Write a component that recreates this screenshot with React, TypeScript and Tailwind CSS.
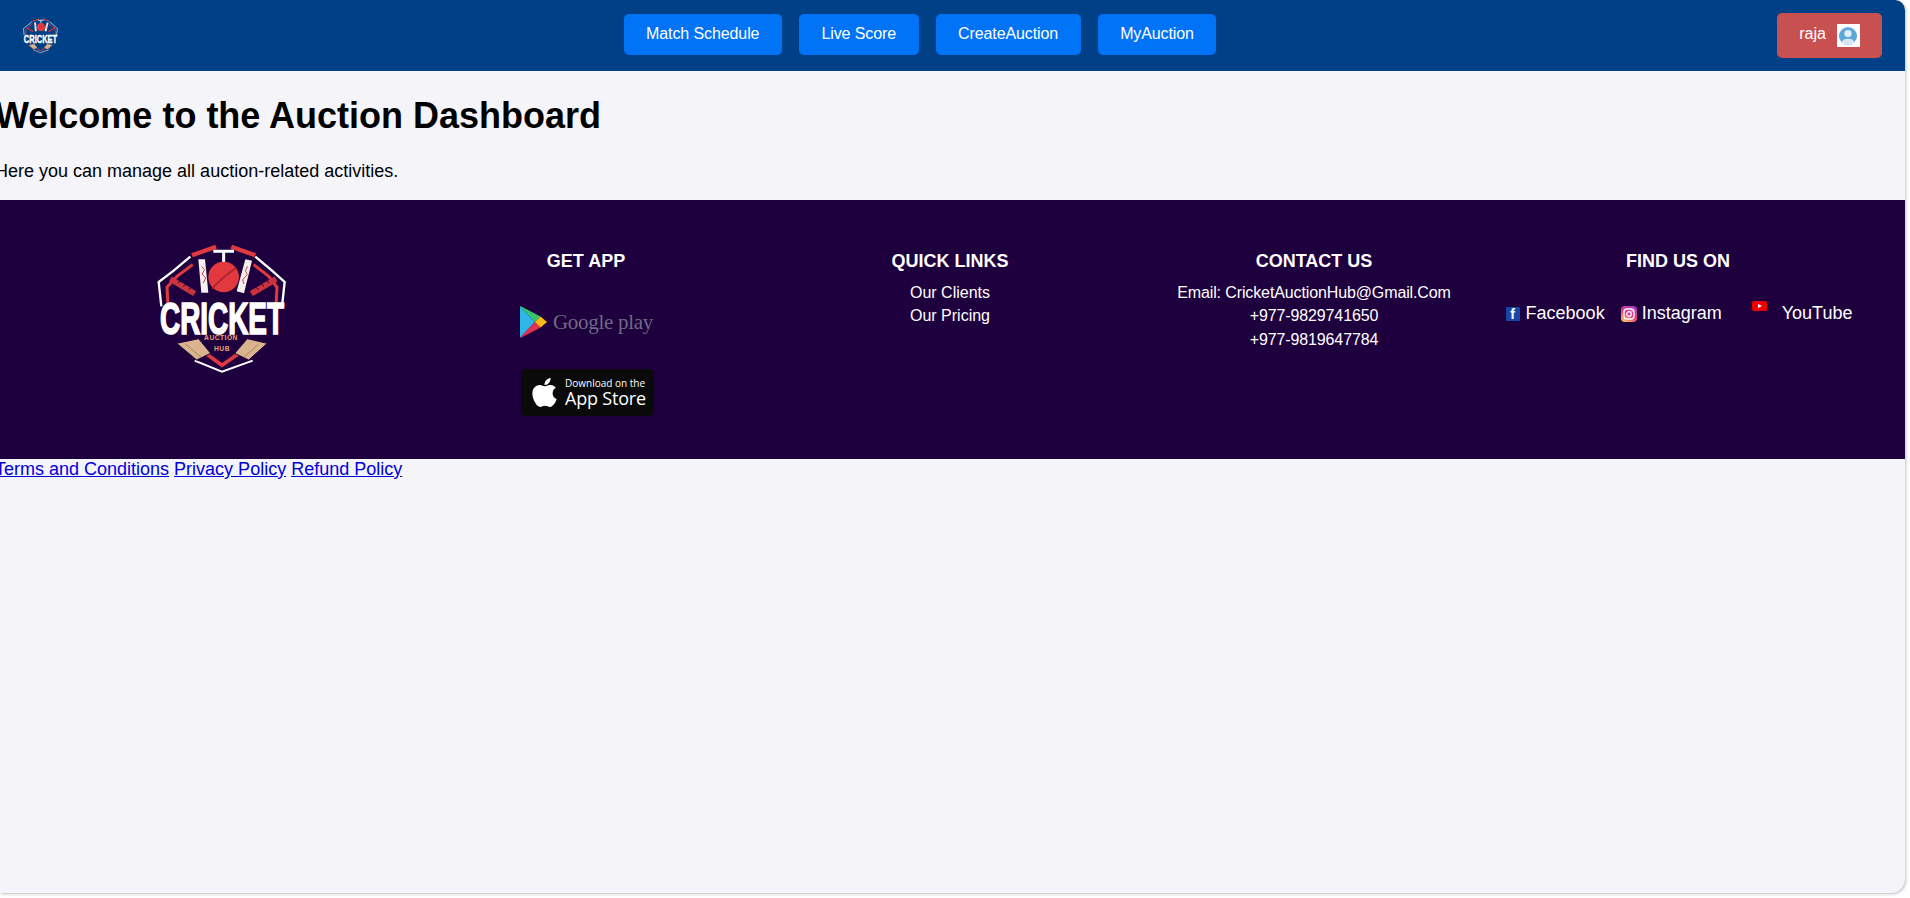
import { FaApple } from "react-icons/fa";

const NAV_ITEMS = ["Match Schedule", "Live Score", "CreateAuction", "MyAuction"];

function CricketLogo({ className, detail = true }: { className: string; detail?: boolean }) {
  return (
    <svg viewBox="55 35 390 390" className={className}>
      {/* shield */}
      <path d="M155 76 L105 118 L60 152 L68 225 M350 76 L400 118 L438 152 L430 225" fill="none" stroke="#fff" strokeWidth="7" />
      <path d="M162 100 L115 135 L85 168 L88 225 M345 100 L390 135 L415 168 L412 225" fill="none" stroke="#e0393f" strokeWidth="9" />
      {/* bails */}
      <path d="M160 72 L232 46" stroke="#e0393f" strokeWidth="13" />
      <path d="M278 46 L350 72" stroke="#e0393f" strokeWidth="13" />
      <path d="M224 60 H286 M255 60 V92" stroke="#fff" strokeWidth="9" fill="none" />
      {/* stumps */}
      <polygon points="179,84 199,84 209,184 188,184" fill="#f4f0ee" />
      <polygon points="320,84 340,88 316,186 294,180" fill="#f4f0ee" />
      <path d="M189 105 L198 115 L190 128 L201 140 L194 155" stroke="#c9444a" strokeWidth="3" fill="none" />
      <path d="M327 105 L320 118 L326 130 L312 145 L316 158" stroke="#c9444a" strokeWidth="3" fill="none" />
      {/* ball */}
      <circle cx="255" cy="137" r="46" fill="#e2393f" />
      <path d="M292 110 C270 125 240 150 220 172" stroke="#a8242c" strokeWidth="5" fill="none" />
      {/* bat handles */}
      <path d="M95 143 L168 187" stroke="#c9343c" strokeWidth="17" />
      <path d="M412 143 L338 187" stroke="#c9343c" strokeWidth="17" />
      <path d="M118 155 L128 146 M134 165 L144 156 M150 175 L160 166 M392 155 L382 146 M376 165 L366 156 M360 175 L350 166" stroke="#1f003f" strokeWidth="3" />
      {/* chevrons */}
      <path d="M190 358 L250 402 L312 358" fill="none" stroke="#e0393f" strokeWidth="11" />
      <path d="M168 388 L250 421 L342 388" fill="none" stroke="#fff" strokeWidth="6" />
      {/* bats */}
      <polygon points="114,336 180,322 216,366 174,386" fill="#d9b48c" stroke="#1f003f" strokeWidth="3" />
      <polygon points="386,336 326,322 288,366 330,386" fill="#d9b48c" stroke="#1f003f" strokeWidth="3" />
      <path d="M140 338 L188 378 M360 338 L316 378" stroke="#a98560" strokeWidth="3" />
      <text x="64" y="309" textLength="372" lengthAdjust="spacingAndGlyphs" fontFamily="'Liberation Sans', sans-serif" fontWeight="700" fontSize="132" fill="#fff" stroke="#fff" strokeWidth="5">
        CRICKET
      </text>
      {detail && (
        <>
          <text x="247" y="327" textAnchor="middle" fontFamily="'Liberation Sans', sans-serif" fontWeight="700" fontSize="20" letterSpacing="1.5" fill="#e8a36f">
            AUCTION
          </text>
          <text x="250" y="358" textAnchor="middle" fontFamily="'Liberation Sans', sans-serif" fontWeight="700" fontSize="20" letterSpacing="1.5" fill="#e8a36f">
            HUB
          </text>
        </>
      )}
    </svg>
  );
}

function GooglePlayBadge() {
  return (
    <div className="flex h-[34px] w-[134px] items-center">
      <svg viewBox="0 0 30 34" className="h-[34px] w-[28px] shrink-0">
        <polygon points="0,0 16,17 0,34" fill="#2fb6e8" />
        <polygon points="0,0 1,0 22,11 16,17" fill="#37c46f" />
        <polygon points="0,34 1,34 22,23 16,17" fill="#e5304f" />
        <polygon points="22,11 29,17 22,23 16,17" fill="#fbb915" />
      </svg>
      <span className="ml-[5px] font-['Liberation_Serif',serif] text-[21px] leading-none tracking-[-0.3px] whitespace-nowrap text-[#6f6984]">
        Google play
      </span>
    </div>
  );
}

function AppStoreBadge() {
  return (
    <div className="flex h-[47px] w-[133px] items-center rounded-[5px] bg-[#0a0a0a] pl-[9px] text-white">
      <FaApple className="h-[33px] w-[29px] shrink-0" />
      <div className="ml-[6px] flex flex-col font-['Open_Sans',sans-serif]">
        <span className="text-[10px] leading-[12px] whitespace-nowrap">Download on the</span>
        <span className="text-[18px] leading-[19px] font-medium tracking-[-0.2px] whitespace-nowrap">App Store</span>
      </div>
    </div>
  );
}

function InstagramIcon() {
  return (
    <svg viewBox="0 0 16 16" className="h-4 w-4 shrink-0">
      <defs>
        <linearGradient id="ig" x1="0.2" y1="1" x2="0.8" y2="0">
          <stop offset="0" stopColor="#fdc468" />
          <stop offset="0.45" stopColor="#e8417c" />
          <stop offset="1" stopColor="#a737c8" />
        </linearGradient>
      </defs>
      <rect width="16" height="16" rx="4" fill="url(#ig)" />
      <rect x="3" y="3" width="10" height="10" rx="3" fill="none" stroke="#fff" strokeWidth="1.3" />
      <circle cx="8" cy="8" r="2.3" fill="none" stroke="#fff" strokeWidth="1.3" />
      <circle cx="11" cy="5" r="0.7" fill="#fff" />
    </svg>
  );
}

function FooterHeading({ children }: { children: string }) {
  return <h4 className="pt-[1px] text-[18px] leading-[21px] font-bold text-white">{children}</h4>;
}

export default function App() {
  return (
    <div className="h-[898px] w-full overflow-hidden bg-white font-['Liberation_Sans',Arial,sans-serif]">
      <div className="h-[893px] w-[1905px] overflow-hidden rounded-tr-[10px] rounded-br-[14px] bg-[#f4f4f9] shadow-[1px_1px_3px_rgba(0,0,0,0.25)]">
        {/* Navbar */}
        <header className="flex h-[71px] items-center justify-between bg-[#004086] px-[23px]">
          <CricketLogo className="h-[35px] w-[35px]" detail={false} />
          <nav className="-mt-[2px] ml-[5px] flex gap-[17px]">
            {NAV_ITEMS.map((item) => (
              <button key={item} className="h-[41px] rounded-[5px] bg-[#0073f7] px-[22.5px] pb-[1px] text-[16px] tracking-[-0.1px] text-white">
                {item}
              </button>
            ))}
          </nav>
          <button className="flex h-[45px] w-[105px] items-center justify-center gap-[11px] rounded-[5px] bg-[#c95050] text-[16px] text-white">
            <span className="-mt-[3px]">raja</span>
            <span className="flex h-[23px] w-[23px] items-center justify-center bg-white">
              <svg viewBox="0 0 20 20" className="h-[20px] w-[20px]">
                <circle cx="10" cy="10" r="9" fill="#5fa8dc" />
                <circle cx="10" cy="7.5" r="3.6" fill="#e4eef6" />
                <path d="M3.5 16 C5 11.5 15 11.5 16.5 16 C14 19.5 6 19.5 3.5 16Z" fill="#dbe6ef" />
              </svg>
            </span>
          </button>
        </header>

        {/* Main */}
        <main className="-ml-[5px] h-[129px] pt-[24px] text-black">
          <h1 className="text-[36px] leading-[42px] font-bold whitespace-nowrap">Welcome to the Auction Dashboard</h1>
          <p className="mt-[24px] text-[18px] leading-[21px]">Here you can manage all auction-related activities.</p>
        </main>

        {/* Footer */}
        <footer className="grid h-[259px] grid-cols-5 bg-[#1e003f] pt-[50px] pr-[45px] pl-[40px] text-white">
          <div className="-mt-[7px] flex justify-center">
            <CricketLogo className="h-[130px] w-[130px]" />
          </div>
          <div className="flex flex-col items-center">
            <FooterHeading>GET APP</FooterHeading>
            <div className="mt-[33px] ml-[2px]">
              <GooglePlayBadge />
            </div>
            <div className="mt-[30px] ml-[3px]">
              <AppStoreBadge />
            </div>
          </div>
          <div className="flex flex-col items-center">
            <FooterHeading>QUICK LINKS</FooterHeading>
            <ul className="mt-[9px] text-center text-[16px] leading-[23px]">
              <li>Our Clients</li>
              <li>Our Pricing</li>
            </ul>
          </div>
          <div className="flex flex-col items-center">
            <FooterHeading>CONTACT US</FooterHeading>
            <div className="mt-[9px] text-center text-[16px] leading-[23.4px] tracking-[-0.12px]">
              <p>Email: CricketAuctionHub@Gmail.Com</p>
              <p>+977-9829741650</p>
              <p>+977-9819647784</p>
            </div>
          </div>
          <div className="flex flex-col items-center">
            <FooterHeading>FIND US ON</FooterHeading>
            <div className="mt-[31px] ml-[2px] flex items-center whitespace-nowrap text-[18px] leading-[21px]">
              <a className="flex items-center">
                <span className="flex h-[14px] w-[14px] items-center justify-center rounded-[1px] bg-[#1746a8] font-bold text-[14px] leading-none text-white">
                  f
                </span>
                <span className="ml-[6px]">Facebook</span>
              </a>
              <a className="ml-[16px] flex items-center">
                <InstagramIcon />
                <span className="ml-[5px]">Instagram</span>
              </a>
              <a className="ml-[30px] flex items-center">
                <svg viewBox="0 0 15 10" className="-mt-[15px] h-[10px] w-[15px] shrink-0">
                  <rect width="15" height="10" rx="2" fill="#ee0000" />
                  <polygon points="6,3 6,7 10,5" fill="#fff" />
                </svg>
                <span className="ml-[15px]">YouTube</span>
              </a>
            </div>
          </div>
        </footer>

        <div className="-ml-[5px] text-[18px] leading-[21px] text-[#0000d8]">
          <a className="underline">Terms and Conditions</a> <a className="underline">Privacy Policy</a>{" "}
          <a className="underline">Refund Policy</a>
        </div>
      </div>
    </div>
  );
}
